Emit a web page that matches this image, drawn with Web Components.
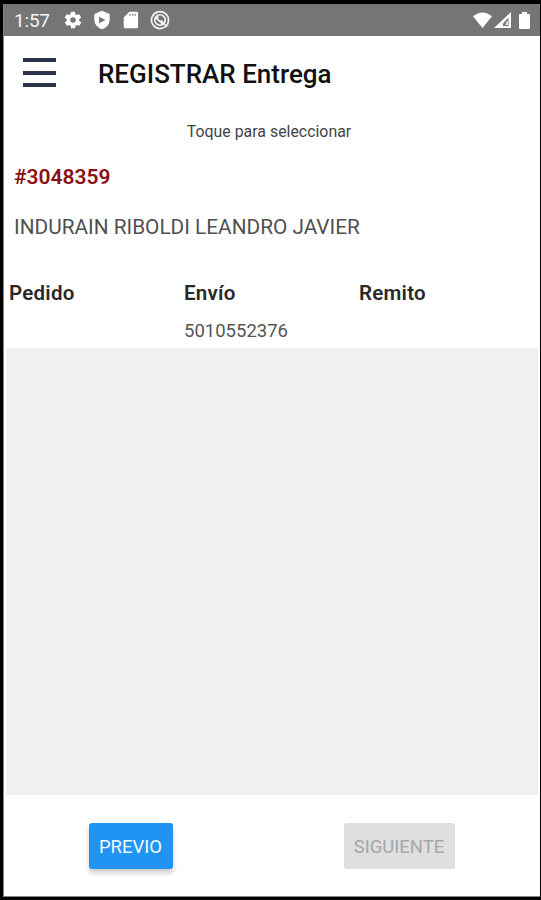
<!DOCTYPE html>
<html lang="es">
<head>
<meta charset="UTF-8">
<title>REGISTRAR Entrega</title>
<style>
  body {
    margin: 0;
    background: #000;
    font-family: Roboto, "Liberation Sans", sans-serif;
  }
</style>
</head>
<body>
<delivery-screen>
  <status-bar slot="status" time="1:57"></status-bar>
  <app-header slot="header">REGISTRAR Entrega</app-header>
  <client-info hint="Toque para seleccionar" number="#3048359">INDURAIN RIBOLDI LEANDRO JAVIER</client-info>
  <order-table pedido="" envio="5010552376" remito=""></order-table>
  <step-button slot="actions">PREVIO</step-button>
  <step-button slot="actions" disabled>SIGUIENTE</step-button>
</delivery-screen>

<script>
  class DeliveryScreen extends HTMLElement {
    constructor() {
      super();
      this.attachShadow({ mode: "open" });
      this.shadowRoot.innerHTML = `
        <style>
          :host {
            display: flex;
            flex-direction: column;
            box-sizing: border-box;
            height: 900px;
            padding: 4px 1px 3px 3px;
            background: #000;
          }
          .screen {
            flex: 1;
            display: flex;
            flex-direction: column;
            background: #fff;
            border: solid #858585;
            border-width: 0 0 1px 1px;
          }
          .list {
            flex: 1;
            margin: 0 2px 0 2px;
            background: #f0f0f0;
          }
          .actions {
            display: grid;
            grid-template-columns: 253px 284px;
            justify-items: center;
            height: 73px;
            padding-top: 28px;
          }
        </style>
        <div class="screen">
          <slot name="status"></slot>
          <slot name="header"></slot>
          <slot></slot>
          <div class="list"></div>
          <div class="actions"><slot name="actions"></slot></div>
        </div>
      `;
    }
  }

  class StatusBar extends HTMLElement {
    constructor() {
      super();
      this.attachShadow({ mode: "open" });
      this.shadowRoot.innerHTML = `
        <style>
          :host {
            display: flex;
            align-items: center;
            justify-content: space-between;
            box-sizing: border-box;
            height: 32px;
            padding: 1px 10px 0 10px;
            background: #757575;
            color: #f4f4f4;
          }
          .left, .right { display: flex; align-items: center; }
          .right { margin-top: -1px; }
          .time { width: 49px; font-size: 19px; line-height: 22px; letter-spacing: -0.2px; }
          .left svg { margin: -1px 9px 0 0; }
          svg { display: block; fill: #fff; }
        </style>
        <div class="left">
          <span class="time">${this.getAttribute("time")}</span>
          <svg width="20" height="20" viewBox="0 0 24 24"><path d="M19.4 13a7.800 7.800 0 0 0 0-2l2.100-1.600a.5.5 0 0 0 .1-.7l-2-3.400a.5.5 0 0 0-.6-.2l-2.500 1a7.300 7.300 0 0 0-1.700-1l-.4-2.600a.5.5 0 0 0-.5-.5h-4a.5.5 0 0 0-.5.500l-.4 2.600a7.300 7.300 0 0 0-1.700 1l-2.500-1a.5.5 0 0 0-.6.2l-2 3.400a.5.5 0 0 0 .1.7L4.600 11a7.800 7.800 0 0 0 0 2l-2.100 1.600a.5.5 0 0 0-.1.7l2 3.400c.1.2.4.3.6.2l2.500-1a7.300 7.300 0 0 0 1.700 1l.4 2.600c0 .3.2.5.5.5h4c.3 0 .5-.2.5-.5l.4-2.600a7.300 7.300 0 0 0 1.700-1l2.500 1c.2.1.5 0 .6-.2l2-3.400a.5.5 0 0 0-.1-.7zM12 15.300a3.300 3.300 0 1 1 0-6.600 3.300 3.300 0 0 1 0 6.600z"/></svg>
          <svg width="20" height="20" viewBox="0 0 24 24"><path d="M12 .8 2.800 4.700v7c0 5.300 3.900 9.800 9.200 11.500 5.300-1.700 9.200-6.200 9.200-11.500v-7z"/><path fill="#757575" d="m8.500 8 7.500 4-7.500 4z"/></svg>
          <svg width="20" height="20" viewBox="0 0 24 24"><path d="M18.500 2H10L3.300 9v11c0 1.100.9 2 2 2h13.200a2 2 0 0 0 2-2V4a2 2 0 0 0-2-2z"/><path fill="#999" d="M9.800 4.500h1.800V7H9.800zM13 4.500h1.800V7H13zM16.200 4.500H18V7h-1.800z"/></svg>
          <svg width="20" height="20" viewBox="0 0 24 24" style="fill:none;stroke:#f4f4f4;stroke-width:2"><path d="M18.500 20A10.200 10.200 0 1 1 22.200 12c0 3-1 5.500-2.500 7.500L13 12.500"/><circle cx="12" cy="12" r="6.300"/><path d="M7 9.500l8.500 7.500M9.500 7.500l-1 4"/></svg>
        </div>
        <div class="right">
          <svg width="19" height="16" viewBox="0 0 19 16"><path d="M0 4.300Q9.500-3.300 19 4.300L9.500 16z"/></svg>
          <svg width="17" height="16" viewBox="0 0 17 16" style="margin-left:2px"><path d="M17 0v16H0z"/><path fill="#757575" d="M14.500 5.500v8.500H9v-2.500z"/><path fill="#ddd" d="M13 9h1v4h-3z"/></svg>
          <svg width="11" height="17" viewBox="0 0 11 17" style="margin-left:8px"><path d="M3 0h5v2h2q1 0 1 1v13q0 1-1 1H1q-1 0-1-1V3q0-1 1-1h2z"/></svg>
        </div>
      `;
    }
  }

  class AppHeader extends HTMLElement {
    constructor() {
      super();
      this.attachShadow({ mode: "open" });
      this.shadowRoot.innerHTML = `
        <style>
          :host {
            display: flex;
            align-items: center;
            height: 74px;
            padding-left: 19px;
            color: #111;
          }
          .menu {
            display: grid;
            gap: 8.500px;
            width: 33px;
            margin: -1px 42px 0 0;
          }
          .menu i { height: 4px; background: #2b3448; }
          h1 {
            margin: 2px 0 0;
            font-size: 26px;
            font-weight: 500;
            line-height: 32px;
            white-space: nowrap;
          }
        </style>
        <div class="menu"><i></i><i></i><i></i></div>
        <h1><slot></slot></h1>
      `;
    }
  }

  class ClientInfo extends HTMLElement {
    constructor() {
      super();
      this.attachShadow({ mode: "open" });
      this.shadowRoot.innerHTML = `
        <style>
          :host { display: block; height: 168px; white-space: nowrap; }
          p { margin: 0; }
          .hint {
            padding: 12px 6px 0 0;
            font-size: 15.900px;
            line-height: 20px;
            text-align: center;
            color: #444;
          }
          .number {
            padding: 23px 0 0 10px;
            font-size: 21px;
            font-weight: 600;
            line-height: 24px;
            color: #8b1014;
          }
          .name {
            padding: 26px 0 0 10px;
            font-size: 20.800px;
            line-height: 24px;
            color: #505050;
          }
        </style>
        <p class="hint">${this.getAttribute("hint")}</p>
        <p class="number">${this.getAttribute("number")}</p>
        <p class="name"><slot></slot></p>
      `;
    }
  }

  class OrderTable extends HTMLElement {
    constructor() {
      super();
      this.attachShadow({ mode: "open" });
      const columns = [["Pedido", "pedido"], ["Envío", "envio"], ["Remito", "remito"]];
      this.shadowRoot.innerHTML = `
        <style>
          :host {
            display: grid;
            grid-template-columns: repeat(3, 175px);
            height: 70px;
            padding-left: 5px;
          }
          .title {
            margin-top: 3px;
            font-size: 20.500px;
            font-weight: 600;
            line-height: 24px;
            letter-spacing: 0.25px;
            color: #292929;
          }
          .value {
            margin-top: 14px;
            font-size: 18.500px;
            line-height: 24px;
            color: #555;
          }
        </style>
        ${columns
          .map(
            ([title, name]) => `
          <div>
            <div class="title">${title}</div>
            <div class="value">${this.getAttribute(name)}</div>
          </div>
        `
          )
          .join("")}
      `;
    }
  }

  class StepButton extends HTMLElement {
    constructor() {
      super();
      this.attachShadow({ mode: "open" });
      this.shadowRoot.innerHTML = `
        <style>
          :host {
            display: block;
            width: 84px;
          }
          :host([disabled]) { width: 111px; }
          button {
            display: block;
            width: 100%;
            height: 46px;
            padding: 2px 0 0;
            border: 0;
            border-radius: 3px;
            background: #2194f3;
            box-shadow: 0 4px 5px rgba(0, 0, 0, 0.2);
            color: #f4faff;
            font-family: inherit;
            font-size: 18.500px;
            white-space: nowrap;
          }
          button:disabled {
            background: #dfdfdf;
            box-shadow: none;
            color: #a6a6a6;
          }
        </style>
        <button ${this.hasAttribute("disabled") ? "disabled" : ""}><slot></slot></button>
      `;
    }
  }

  customElements.define("delivery-screen", DeliveryScreen);
  customElements.define("status-bar", StatusBar);
  customElements.define("app-header", AppHeader);
  customElements.define("client-info", ClientInfo);
  customElements.define("order-table", OrderTable);
  customElements.define("step-button", StepButton);
</script>
</body>
</html>
